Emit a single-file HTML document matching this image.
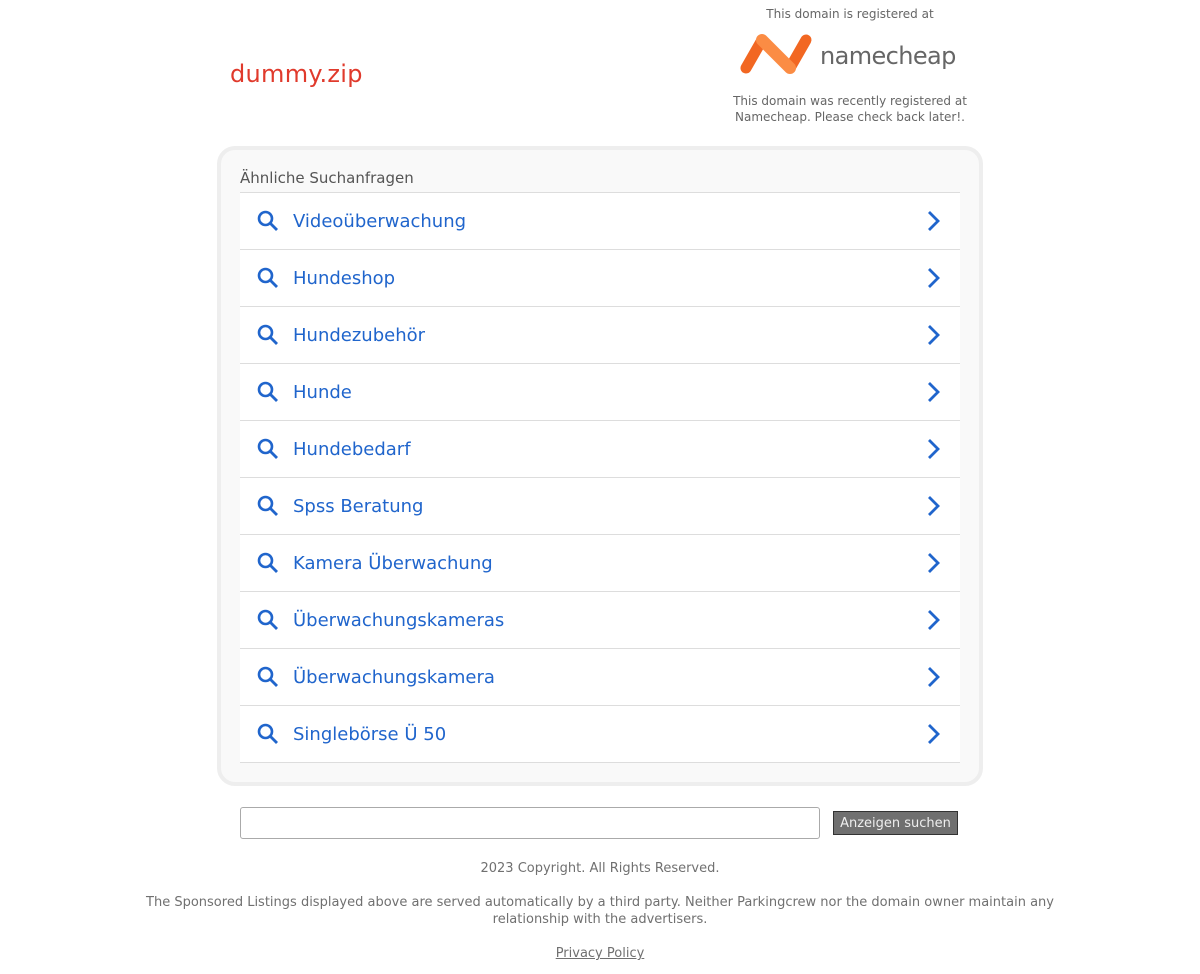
<!DOCTYPE html>
<html><head><meta charset="utf-8"><style>
*{box-sizing:border-box}
body{margin:0;background:#fff;font-family:"DejaVu Sans","Liberation Sans",sans-serif;width:1200px;height:974px;overflow:hidden;position:relative}
.abs{position:absolute}
.domain{left:230px;top:60px;font-size:24px;color:#e03a2c;letter-spacing:0.3px}
.reg{left:720px;width:260px;text-align:center;font-size:12px;color:#666}
.box{left:217px;top:146px;width:766px;height:640px;border:4px solid #eee;border-radius:18px;background:#f9f9f9}
.head{left:240px;top:169px;font-size:15px;color:#555}
.list{left:240px;top:192px;width:720px;border-top:1px solid #ddd;background:#fff}
.row{height:57px;border-bottom:1px solid #ddd;position:relative;background:#fff}
.row span{position:absolute;left:53px;top:18px;font-size:18px;color:#2065cc}
.row svg.s{position:absolute;left:16px;top:16px}
.row svg.c{position:absolute;left:686px;top:16px}
.inp{left:240px;top:807px;width:580px;height:32px;border:1px solid #aaa;border-radius:3px;background:#fff}
.btn{left:833px;top:811px;width:125px;height:24px;background:#707070;border:1px solid #333;color:#eee;font-size:13px;text-align:center;line-height:23px}
.ft{left:0;width:1200px;text-align:center;font-size:13px;color:#707070}
</style></head><body>
<div class="abs domain">dummy.zip</div>
<div class="abs reg" style="top:7px">This domain is registered at</div>
<svg class="abs" style="left:738px;top:32px" width="80" height="46" viewBox="0 0 80 46">
<line x1="8" y1="36" x2="24" y2="8" stroke="#f26722" stroke-width="11" stroke-linecap="round"/>
<line x1="52" y1="36" x2="68" y2="8" stroke="#f26722" stroke-width="11" stroke-linecap="round"/>
<line x1="24" y1="8" x2="52" y2="36" stroke="#fb8c44" stroke-width="12" stroke-linecap="round"/>
</svg>
<div class="abs" style="left:820px;top:42px;font-size:24px;color:#666;letter-spacing:-0.6px">namecheap</div>
<div class="abs reg" style="top:94px;line-height:15.5px">This domain was recently registered at<br>Namecheap. Please check back later!.</div>
<div class="abs box"></div>
<div class="abs head">Ähnliche Suchanfragen</div>
<div class="abs list">
<div class="row"><svg class="s" width="24" height="24" viewBox="0 0 24 24"><circle cx="9.5" cy="9.5" r="6.5" fill="none" stroke="#2065cc" stroke-width="2.6"/><line x1="14.5" y1="14.5" x2="21" y2="21" stroke="#2065cc" stroke-width="2.8"/></svg><span>Videoüberwachung</span><svg class="c" width="16" height="24" viewBox="0 0 16 24"><path d="M3 3l9 9-9 9" fill="none" stroke="#2065cc" stroke-width="2.8"/></svg></div>
<div class="row"><svg class="s" width="24" height="24" viewBox="0 0 24 24"><circle cx="9.5" cy="9.5" r="6.5" fill="none" stroke="#2065cc" stroke-width="2.6"/><line x1="14.5" y1="14.5" x2="21" y2="21" stroke="#2065cc" stroke-width="2.8"/></svg><span>Hundeshop</span><svg class="c" width="16" height="24" viewBox="0 0 16 24"><path d="M3 3l9 9-9 9" fill="none" stroke="#2065cc" stroke-width="2.8"/></svg></div>
<div class="row"><svg class="s" width="24" height="24" viewBox="0 0 24 24"><circle cx="9.5" cy="9.5" r="6.5" fill="none" stroke="#2065cc" stroke-width="2.6"/><line x1="14.5" y1="14.5" x2="21" y2="21" stroke="#2065cc" stroke-width="2.8"/></svg><span>Hundezubehör</span><svg class="c" width="16" height="24" viewBox="0 0 16 24"><path d="M3 3l9 9-9 9" fill="none" stroke="#2065cc" stroke-width="2.8"/></svg></div>
<div class="row"><svg class="s" width="24" height="24" viewBox="0 0 24 24"><circle cx="9.5" cy="9.5" r="6.5" fill="none" stroke="#2065cc" stroke-width="2.6"/><line x1="14.5" y1="14.5" x2="21" y2="21" stroke="#2065cc" stroke-width="2.8"/></svg><span>Hunde</span><svg class="c" width="16" height="24" viewBox="0 0 16 24"><path d="M3 3l9 9-9 9" fill="none" stroke="#2065cc" stroke-width="2.8"/></svg></div>
<div class="row"><svg class="s" width="24" height="24" viewBox="0 0 24 24"><circle cx="9.5" cy="9.5" r="6.5" fill="none" stroke="#2065cc" stroke-width="2.6"/><line x1="14.5" y1="14.5" x2="21" y2="21" stroke="#2065cc" stroke-width="2.8"/></svg><span>Hundebedarf</span><svg class="c" width="16" height="24" viewBox="0 0 16 24"><path d="M3 3l9 9-9 9" fill="none" stroke="#2065cc" stroke-width="2.8"/></svg></div>
<div class="row"><svg class="s" width="24" height="24" viewBox="0 0 24 24"><circle cx="9.5" cy="9.5" r="6.5" fill="none" stroke="#2065cc" stroke-width="2.6"/><line x1="14.5" y1="14.5" x2="21" y2="21" stroke="#2065cc" stroke-width="2.8"/></svg><span>Spss Beratung</span><svg class="c" width="16" height="24" viewBox="0 0 16 24"><path d="M3 3l9 9-9 9" fill="none" stroke="#2065cc" stroke-width="2.8"/></svg></div>
<div class="row"><svg class="s" width="24" height="24" viewBox="0 0 24 24"><circle cx="9.5" cy="9.5" r="6.5" fill="none" stroke="#2065cc" stroke-width="2.6"/><line x1="14.5" y1="14.5" x2="21" y2="21" stroke="#2065cc" stroke-width="2.8"/></svg><span>Kamera Überwachung</span><svg class="c" width="16" height="24" viewBox="0 0 16 24"><path d="M3 3l9 9-9 9" fill="none" stroke="#2065cc" stroke-width="2.8"/></svg></div>
<div class="row"><svg class="s" width="24" height="24" viewBox="0 0 24 24"><circle cx="9.5" cy="9.5" r="6.5" fill="none" stroke="#2065cc" stroke-width="2.6"/><line x1="14.5" y1="14.5" x2="21" y2="21" stroke="#2065cc" stroke-width="2.8"/></svg><span>Überwachungskameras</span><svg class="c" width="16" height="24" viewBox="0 0 16 24"><path d="M3 3l9 9-9 9" fill="none" stroke="#2065cc" stroke-width="2.8"/></svg></div>
<div class="row"><svg class="s" width="24" height="24" viewBox="0 0 24 24"><circle cx="9.5" cy="9.5" r="6.5" fill="none" stroke="#2065cc" stroke-width="2.6"/><line x1="14.5" y1="14.5" x2="21" y2="21" stroke="#2065cc" stroke-width="2.8"/></svg><span>Überwachungskamera</span><svg class="c" width="16" height="24" viewBox="0 0 16 24"><path d="M3 3l9 9-9 9" fill="none" stroke="#2065cc" stroke-width="2.8"/></svg></div>
<div class="row"><svg class="s" width="24" height="24" viewBox="0 0 24 24"><circle cx="9.5" cy="9.5" r="6.5" fill="none" stroke="#2065cc" stroke-width="2.6"/><line x1="14.5" y1="14.5" x2="21" y2="21" stroke="#2065cc" stroke-width="2.8"/></svg><span>Singlebörse Ü 50</span><svg class="c" width="16" height="24" viewBox="0 0 16 24"><path d="M3 3l9 9-9 9" fill="none" stroke="#2065cc" stroke-width="2.8"/></svg></div>
</div>
<div class="abs inp"></div>
<div class="abs btn">Anzeigen suchen</div>
<div class="abs ft" style="top:861px">2023 Copyright. All Rights Reserved.</div>
<div class="abs ft" style="top:894px;line-height:17px;left:140px;width:920px">The Sponsored Listings displayed above are served automatically by a third party. Neither Parkingcrew nor the domain owner maintain any relationship with the advertisers.</div>
<div class="abs ft" style="top:946px"><span style="text-decoration:underline">Privacy Policy</span></div>
</body></html>
